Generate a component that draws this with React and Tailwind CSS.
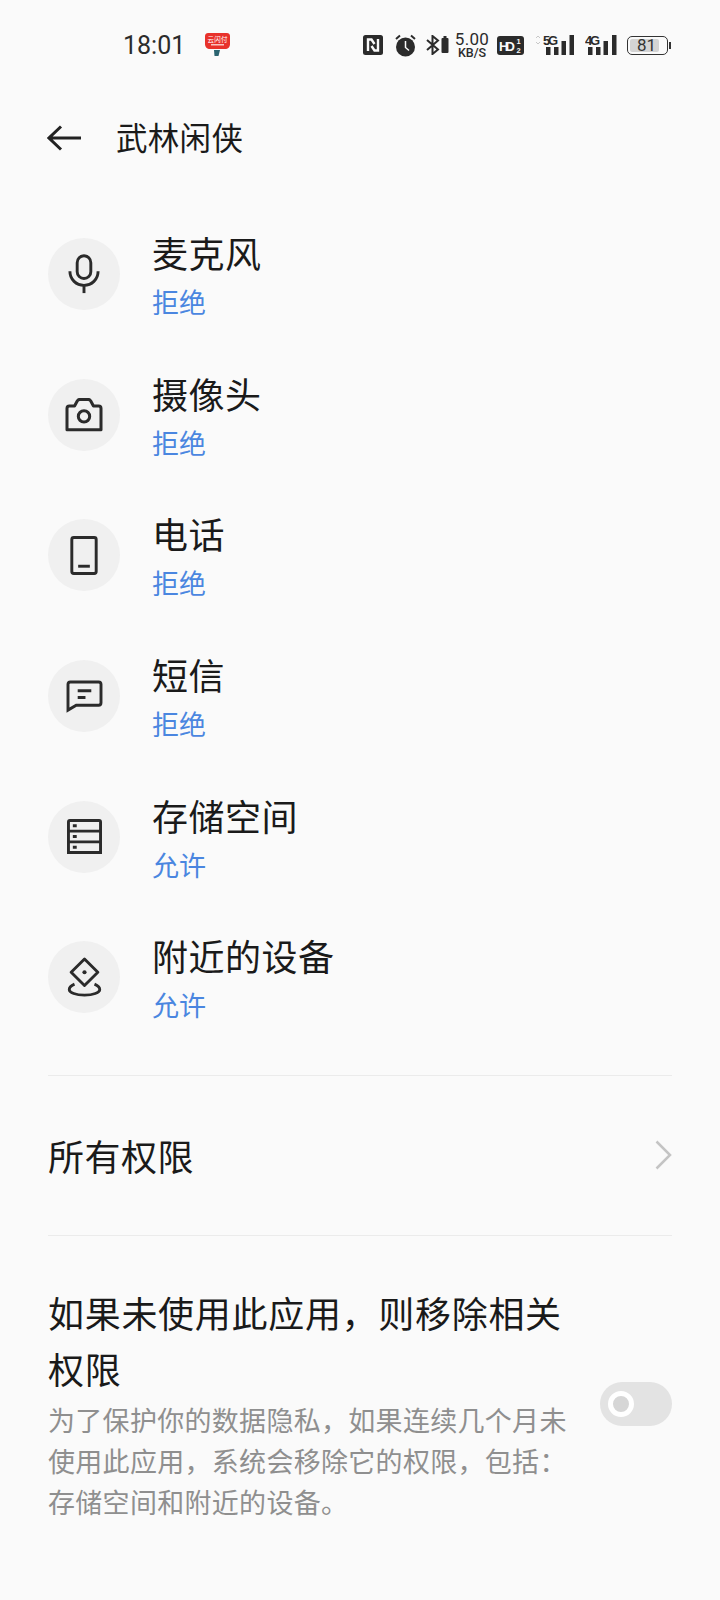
const cjk = { fontFamily: '"Noto Sans CJK SC", sans-serif' };

const items = [
  { title: "麦克风", state: "拒绝", icon: MicIcon },
  { title: "摄像头", state: "拒绝", icon: CameraIcon },
  { title: "电话", state: "拒绝", icon: PhoneIcon },
  { title: "短信", state: "拒绝", icon: SmsIcon },
  { title: "存储空间", state: "允许", icon: StorageIcon },
  { title: "附近的设备", state: "允许", icon: NearbyIcon },
];

function MicIcon() {
  return (
    <svg width="34" height="40" viewBox="0 0 36 44" fill="none" stroke="#2b2b2b" strokeWidth="3.200">
      <rect x="10.500" y="2" width="15" height="25" rx="7.500" />
      <path d="M2.500 19c0 9 7 15.500 15.500 15.500S33.500 28 33.500 19" />
      <path d="M18 34.500V43" />
    </svg>
  );
}

function CameraIcon() {
  return (
    <svg width="38" height="34" viewBox="0 0 40 36" fill="none" stroke="#2b2b2b" strokeWidth="3.200" strokeLinejoin="round">
      <path d="M2 11c0-1.500 1-2.500 2.500-2.500H10L13 3c.5-1 1-1.500 2.500-1.500h9c1.500 0 2 .5 2.500 1.500l3 5.500h5.500C37 8.500 38 9.500 38 11v22.500H2z" />
      <circle cx="20" cy="19.500" r="6" />
    </svg>
  );
}

function PhoneIcon() {
  return (
    <svg width="28" height="39" viewBox="0 0 28 40" fill="none" stroke="#2b2b2b" strokeWidth="3">
      <rect x="1.500" y="1.500" width="25" height="37" rx="2" />
      <path d="M8 31h12" />
    </svg>
  );
}

function SmsIcon() {
  return (
    <svg width="37" height="33" viewBox="0 0 38 34" fill="none" stroke="#2b2b2b" strokeWidth="3">
      <path d="M2 31V4.500C2 3 3 2 4.500 2h29C35 2 36 3 36 4.500v19c0 1.500-1 2.500-2.500 2.500H10.500z" />
      <path d="M12 11h14M12 18h8" />
    </svg>
  );
}

function StorageIcon() {
  return (
    <svg width="35" height="35" viewBox="0 0 36 36" fill="none" stroke="#2b2b2b" strokeWidth="3">
      <path d="M1.500 34.500V3C1.500 2 2 1.500 3 1.500h30c1 0 1.500.5 1.500 1.500v31.500z" />
      <path d="M1.500 12.500h33M1.500 23.500h33" />
      <path d="M6 7h4M6 18h4M6 29h4" />
    </svg>
  );
}

function NearbyIcon() {
  return (
    <svg width="35" height="40" viewBox="0 0 36 42" fill="none" stroke="#2b2b2b" strokeWidth="3">
      <path d="M18 2l14 14-14 14L4 16z" strokeLinejoin="round" />
      <circle cx="18" cy="16" r="2.200" fill="#2b2b2b" stroke="none" />
      <path d="M7.500 28.500C4 30 2 32 2 34c0 3.500 7 6 16 6s16-2.500 16-6c0-2-2-4-5.500-5.500" />
    </svg>
  );
}

function AppBadge() {
  return (
    <svg width="25" height="24" viewBox="0 0 25 24">
      <path d="M3 0h19c1.500 0 3 1.200 3 3v8c0 3-2 5-5 5H5c-3 0-5-2-5-5V3c0-1.800 1.500-3 3-3z" fill="#e8322b" />
      <text x="2.500" y="9" fontSize="6.500" fill="#fff" fontFamily="Noto Sans CJK SC" textLength="20">云闪付</text>
      <rect x="6" y="11" width="13" height="1.500" fill="#f9c4c0" />
      <path d="M9 17h6l-1.500 6H9.500z" fill="#2b6470" />
    </svg>
  );
}

function NfcIcon() {
  return (
    <svg width="20" height="20" viewBox="0 0 20 20">
      <rect width="20" height="20" rx="2.500" fill="#2b2b2b" />
      <path d="M5 16V4.500h3.500l3 4.500M15 4v11.500h-3.500l-3-4.500" fill="none" stroke="#fafafa" strokeWidth="2.400" />
    </svg>
  );
}

function AlarmIcon() {
  return (
    <svg width="21" height="23" viewBox="0 0 21 23">
      <circle cx="10.500" cy="13" r="9.500" fill="#2b2b2b" />
      <path d="M10.500 7v6.500l3.500 3" fill="none" stroke="#fafafa" strokeWidth="1.500" />
      <path d="M1 5l4-3.500M20 5l-4-3.500" stroke="#2b2b2b" strokeWidth="2" />
    </svg>
  );
}

function BluetoothIcon() {
  return (
    <svg width="23" height="20" viewBox="0 0 23 20">
      <path d="M1 5l11 9.500-5.500 4.500V1l5.500 4.500L1 15" fill="none" stroke="#2b2b2b" strokeWidth="2" />
      <rect x="15.500" y="3" width="7" height="15" rx="1" fill="#2b2b2b" />
      <rect x="17.500" y="1" width="3" height="2" fill="#2b2b2b" />
    </svg>
  );
}

function HdIcon() {
  return (
    <svg width="27" height="19" viewBox="0 0 27 19">
      <rect width="27" height="19" rx="3" fill="#2b2b2b" />
      <text x="2" y="14.500" fontSize="13" fontWeight="700" fill="#fafafa" fontFamily="Liberation Sans" textLength="16">HD</text>
      <text x="19.500" y="8" fontSize="7.500" fontWeight="700" fill="#fafafa" fontFamily="Liberation Sans">1</text>
      <text x="19.500" y="17" fontSize="7.500" fontWeight="700" fill="#fafafa" fontFamily="Liberation Sans">2</text>
    </svg>
  );
}

function Signal5G() {
  return (
    <svg width="39" height="22" viewBox="0 0 39 22">
      <path d="M1 4l2-2 2 2M1 8l2 2 2-2" fill="none" stroke="#c8c8c8" strokeWidth="1" />
      <text x="8" y="11" fontSize="13" fontWeight="700" fill="#2b2b2b" fontFamily="Liberation Sans" textLength="15">5G</text>
      <rect x="11" y="13" width="4.500" height="8" fill="#2b2b2b" />
      <rect x="19" y="13" width="4.500" height="8" fill="#2b2b2b" />
      <rect x="26.500" y="7" width="4.500" height="14" fill="#2b2b2b" />
      <rect x="34.500" y="1" width="4.500" height="20" fill="#2b2b2b" />
    </svg>
  );
}

function Signal4G() {
  return (
    <svg width="32" height="22" viewBox="0 0 32 22">
      <text x="0" y="11" fontSize="13" fontWeight="700" fill="#2b2b2b" fontFamily="Liberation Sans" textLength="15">4G</text>
      <rect x="3" y="13" width="4.500" height="8" fill="#2b2b2b" />
      <rect x="11" y="13" width="4.500" height="8" fill="#2b2b2b" />
      <rect x="18.500" y="7" width="4.500" height="14" fill="#2b2b2b" />
      <rect x="27" y="1" width="4.500" height="20" fill="#2b2b2b" />
    </svg>
  );
}

function Battery() {
  return (
    <div className="flex items-center">
      <div className="w-[41px] h-[19px] rounded-[5px] border border-[#333] p-[2px]">
        <div className="h-full w-[29px] rounded-[2px] bg-[#d4d4d4] flex items-center justify-center pl-[4px] text-[17px] leading-none text-[#333]">
          81
        </div>
      </div>
      <div className="w-[2px] h-[7px] bg-[#333] ml-[1px]" />
    </div>
  );
}

function StatusBar() {
  return (
    <div className="h-[90px] pl-[123px] pr-[49px] flex items-center text-[#2b2b2b]" style={{ fontFamily: "Roboto" }}>
      <span className="text-[25px] leading-none">18:01</span>
      <div className="ml-[20px]"><AppBadge /></div>
      <div className="ml-auto flex items-center">
        <NfcIcon />
        <div className="ml-[12px]"><AlarmIcon /></div>
        <div className="ml-[10px]"><BluetoothIcon /></div>
        <div className="ml-[6px] flex flex-col items-center w-[34px]">
          <span className="text-[17px] leading-[14px] tracking-[0.3px]">5.00</span>
          <span className="mt-[1px] text-[12.500px] leading-[12px] font-medium">KB/S</span>
        </div>
        <div className="ml-[8px]"><HdIcon /></div>
        <div className="ml-[11px]"><Signal5G /></div>
        <div className="ml-[11px]"><Signal4G /></div>
        <div className="ml-[10px]"><Battery /></div>
      </div>
    </div>
  );
}

export default function App() {
  return (
    <div className="w-[720px] h-[1600px] bg-[#fafafa] overflow-hidden text-[#1a1a1a]" style={cjk}>
      <StatusBar />

      {/* Header */}
      <div className="h-[96px] pl-[47px] flex items-center">
        <svg width="34" height="26" viewBox="0 0 34 26" fill="none" stroke="#222" strokeWidth="3">
          <path d="M34 13H2M14 1.500L2 13l12 11.500" />
        </svg>
        <h1 className="ml-[35px] pb-[3px] text-[31.500px] leading-none font-normal tracking-[0.3px]">武林闲侠</h1>
      </div>

      <div className="pt-[18px]">
        {items.map((item) => (
          <div key={item.title} className="h-[140.600px] pl-[48px] flex items-center">
            <div className="w-[72px] h-[72px] rounded-full bg-[#f0f0f0] flex items-center justify-center">
              <item.icon />
            </div>
            <div className="ml-[32px]">
              <div className="text-[36px] leading-[48px] tracking-[0.500px]">{item.title}</div>
              <div className="mt-[8px] text-[27px] leading-[36px] text-[#4a86e0]">{item.state}</div>
            </div>
          </div>
        ))}
      </div>

      <div className="mt-[27px] mx-[48px] border-t border-[#ebebeb]" />

      <div className="h-[159px] px-[48px] flex items-center justify-between">
        <span className="pb-[1px] text-[36px] leading-none tracking-[0.500px]">所有权限</span>
        <svg width="17" height="30" viewBox="0 0 17 30" fill="none" stroke="#c4c4c4" strokeWidth="2.500">
          <path d="M1.500 1.500L15 15 1.500 28.500" />
        </svg>
      </div>

      <div className="mx-[48px] border-t border-[#ebebeb]" />

      <div className="pl-[48px] pr-[48px] pt-[48px] flex items-center">
        <div className="w-[522px]">
          <div className="text-[36px] leading-[56px] tracking-[0.700px]">如果未使用此应用，则移除相关权限</div>
          <div className="mt-[3px] text-[27px] leading-[41px] tracking-[0.300px] text-[#8f8f8f]">
            为了保护你的数据隐私，如果连续几个月未使用此应用，系统会移除它的权限，包括：存储空间和附近的设备。
          </div>
        </div>
        <div className="ml-auto mt-[2px] w-[72px] h-[44px] rounded-full bg-[#e3e3e3] pl-[8px] flex items-center">
          <div className="w-[26px] h-[26px] rounded-full border-[5px] border-white bg-[#d6d6d6]" />
        </div>
      </div>
    </div>
  );
}
